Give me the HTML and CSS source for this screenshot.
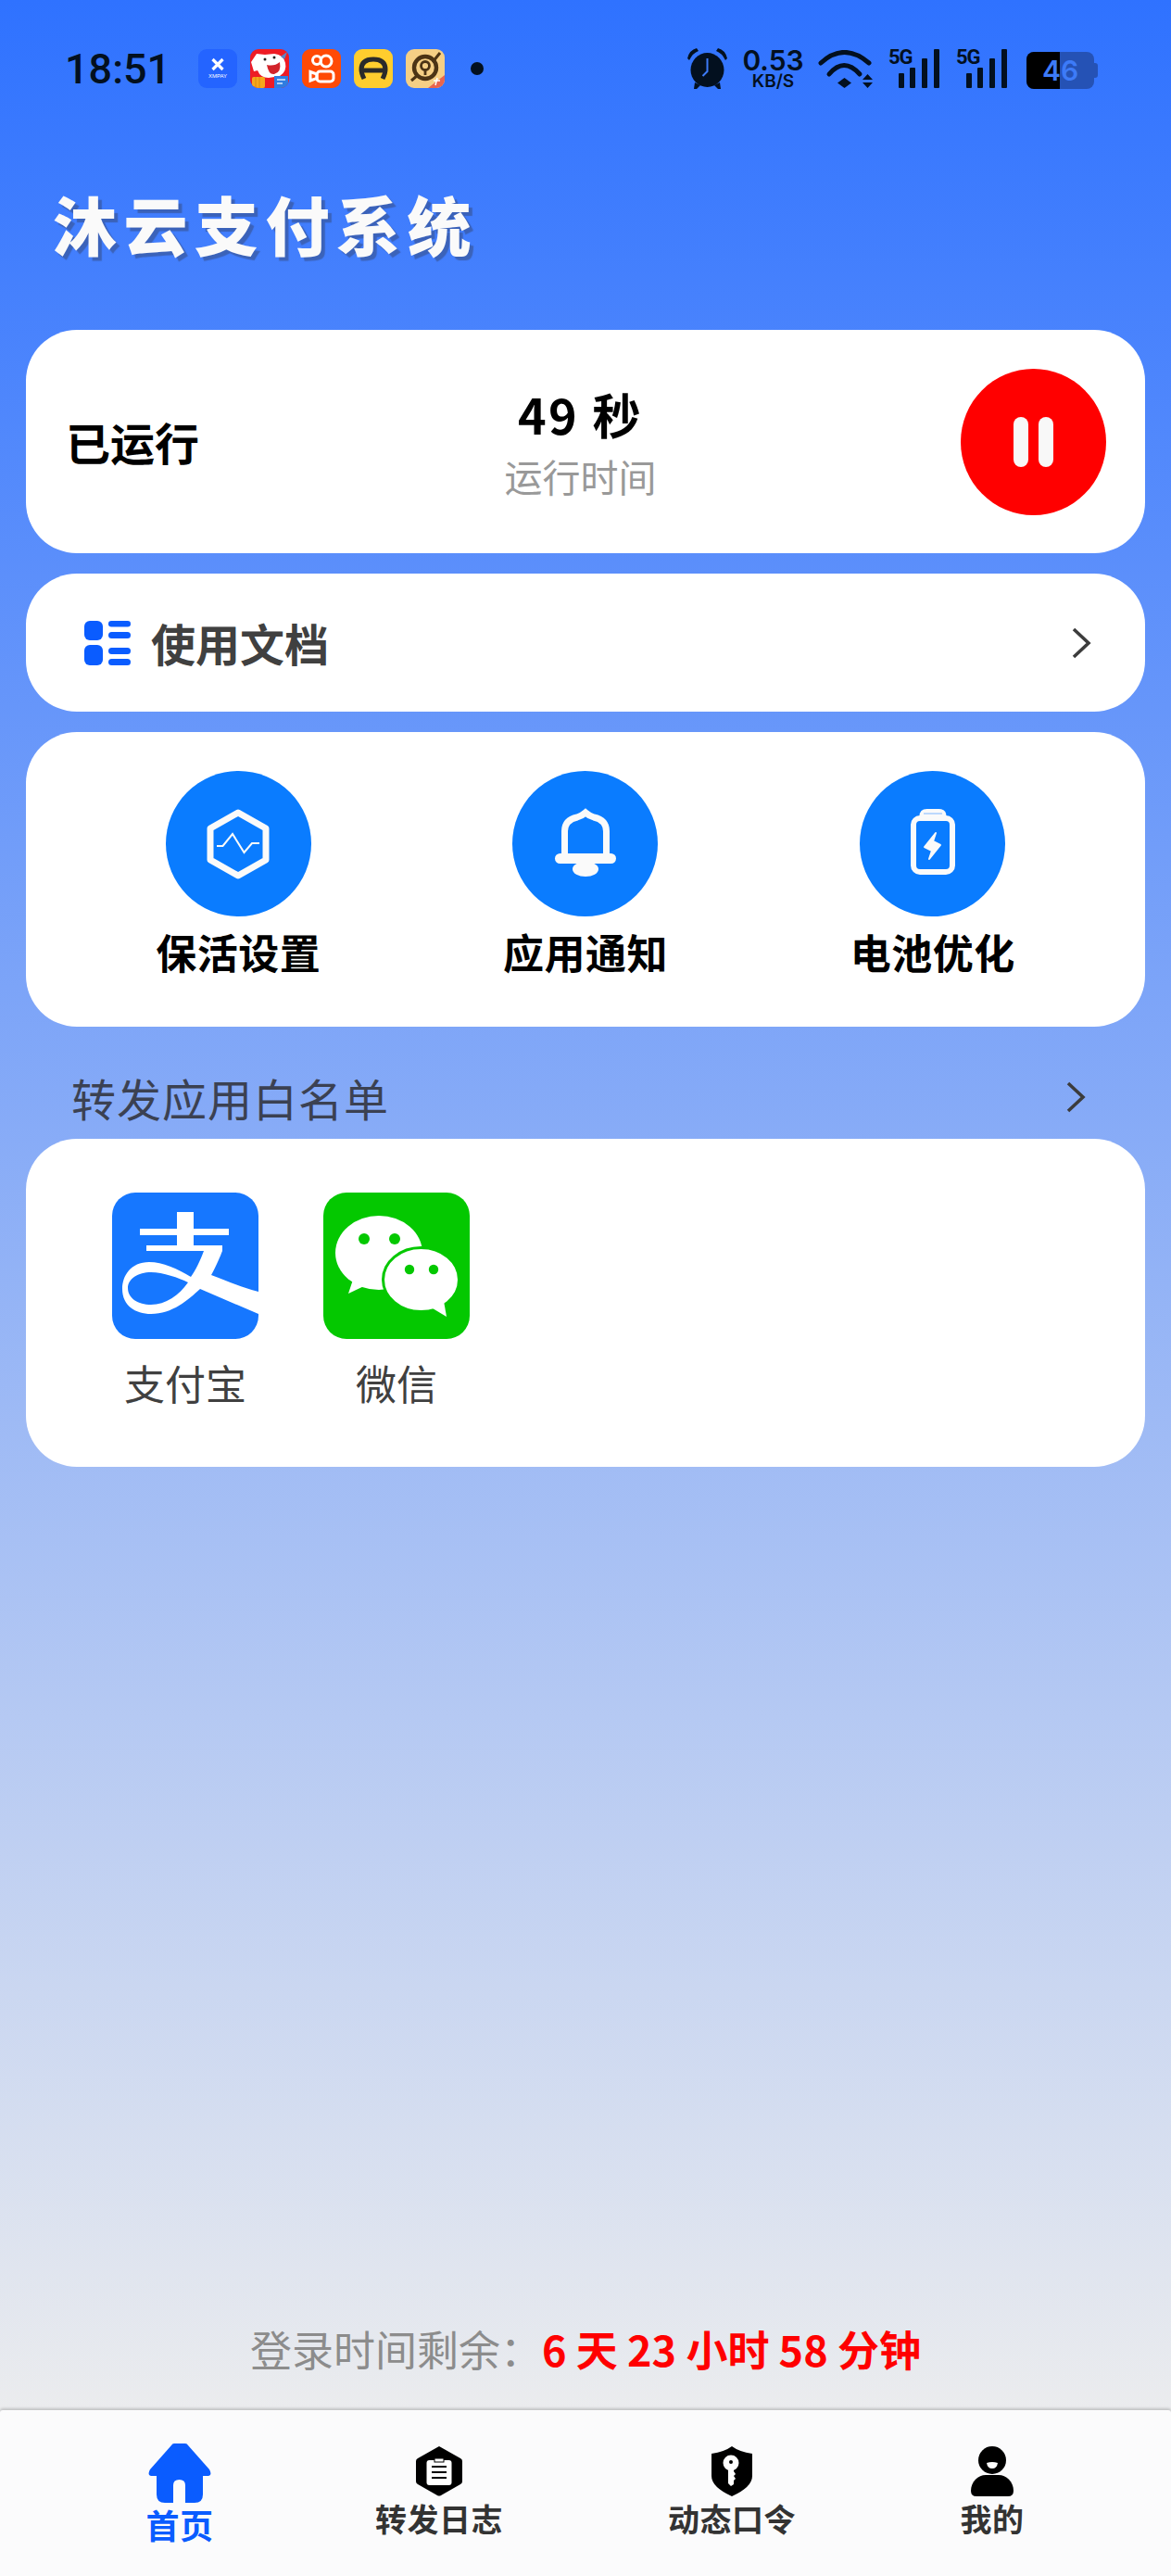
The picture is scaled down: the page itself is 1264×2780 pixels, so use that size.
FILE: index.html
```html
<!DOCTYPE html>
<html lang="zh">
<head>
<meta charset="utf-8">
<title>沐云支付系统</title>
<link rel="stylesheet" href="styles.css">
</head>
<body>
<div class="screen">
  <div class="statusbar">
    <span class="clock">18:51</span>
    <div class="notifs">
      <span class="nicon n-xm"><svg viewBox="0 0 42 42" width="42" height="42"><path d="M15.500 11l11 11M26.500 11l-11 11" stroke="#fff" stroke-width="3.200"/><text x="21" y="31" font-size="6" text-anchor="middle" fill="#fff" class="svgtxt">XMPAY</text></svg></span>
      <span class="nicon n-jd"><svg viewBox="0 0 42 42" width="42" height="42"><rect width="42" height="42" fill="#ee1c25"/><path d="M1 14L7 5l9 1 10-1q10 1 12 10 2 9-6 14l-12 2q-9 0-12-8L4 24z" fill="#fff"/><path d="M18 17q8 2 14-3 2 11-6 13-6 1-8-10z" fill="#d2232a"/><circle cx="16" cy="11" r="1.500" fill="#222"/><circle cx="26" cy="9" r="1.500" fill="#222"/><rect x="2" y="30" width="14" height="12" rx="2" fill="#f6a81c"/><path d="M6 30v12M10 30v12" stroke="#d98a10" stroke-width="1"/><rect x="26" y="29" width="15" height="13" fill="#2f7de1"/><path d="M29 33h9M29 37h6" stroke="#dcecff" stroke-width="1.500"/><path d="M33 8l7-5-3 8z" fill="#5c84c7"/></svg></span>
      <span class="nicon n-ks"><svg viewBox="0 0 42 42" width="42" height="42" fill="none" stroke="#fff" stroke-width="3"><circle cx="16" cy="12" r="4.500"/><circle cx="26" cy="13" r="6"/><rect x="16" y="24" width="18" height="11" rx="3.500"/><path d="M16 27l-7-2.500v9.500l7-2.500z"/></svg></span>
      <span class="nicon n-car"><svg viewBox="0 0 42 42" width="42" height="42" fill="none" stroke="#2a2a2a" stroke-width="5"><path d="M11 32Q8 26 8 22Q8 11 21 11Q34 11 34 22Q34 26 31 32"/><path d="M9 23H33"/></svg></span>
      <span class="nicon n-game"><svg viewBox="0 0 42 42" width="42" height="42" fill="none" stroke="#4c3415"><circle cx="21" cy="20" r="12" stroke-width="4.400"/><circle cx="21" cy="18" r="4.500" stroke-width="2.800"/><path d="M21 22v6" stroke-width="2.800"/><path d="M37 4L29 14M6 34l7-6" stroke-width="3"/><path d="M24 42l18-14v14z" fill="#e8654f" stroke="none"/><path d="M34 31l-2 8M30 34h7" stroke="#fff" stroke-width="1.500"/></svg></span>
      <span class="ndot"></span>
    </div>
    <div class="sys">
      <svg class="alarm" viewBox="0 0 43 44" width="43" height="44"><ellipse cx="21.500" cy="23.500" rx="18" ry="18.500" fill="#03101f"/><path d="M0 11Q2 2 10 0l2 3Q6 5 2 13zM43 11Q41 2 33 0l-2 3q6 2 10 10zM8 37L7 44h3l4-4zM35 37l1 7h-3l-4-4z" fill="#03101f"/><path d="M21.500 11v14l-5 5" stroke="#3d7bf8" stroke-width="2" fill="none"/></svg>
      <div class="speed"><span class="speed-v">0.53</span><span class="speed-u">KB/S</span></div>
      <svg class="wifi" viewBox="0 0 59 41" width="59" height="41"><g fill="none" stroke="#03101f" stroke-width="5" stroke-linecap="round"><path d="M3 14Q28 -9 55 14"/><path d="M12 26Q28 7 45 26"/></g><path d="M28.500 30l7.500 5.500-7.500 5.500-7.500-5.500z" fill="#03101f"/><path d="M48 32l5.500-6 5.500 6zM48 35h11l-5.500 6z" fill="#03101f"/></svg>
      <div class="sig"><span class="sig-5g">5G</span><span class="bar b1"></span><span class="bar b2"></span><span class="bar b3"></span><span class="bar b4"></span></div>
      <div class="sig sig-last"><span class="sig-5g">5G</span><span class="bar b1"></span><span class="bar b2"></span><span class="bar b3"></span><span class="bar b4"></span></div>
      <div class="battery"><span class="batt-fill"></span><span class="batt-num">46</span><span class="batt-cap"></span></div>
    </div>
  </div>

  <h1 class="title">沐云支付系统</h1>

  <main class="cards">
    <section class="card run">
      <span class="run-label">已运行</span>
      <div class="run-center">
        <span class="run-time">49 秒</span>
        <span class="run-sub">运行时间</span>
      </div>
      <button class="pause"><span></span><span></span></button>
    </section>

    <section class="card doc">
      <svg class="doc-icon" viewBox="0 0 50 48" width="50" height="48" fill="#0a5cff"><rect x="0" y="0" width="20" height="21" rx="6"/><rect x="0" y="26" width="20" height="22" rx="6"/><rect x="26" y="0" width="24" height="6.500" rx="3.200"/><rect x="26" y="12" width="24" height="7" rx="3.500"/><rect x="26" y="29" width="24" height="7" rx="3.500"/><rect x="26" y="41" width="24" height="7" rx="3.500"/></svg>
      <span class="doc-text">使用文档</span>
      <svg class="chev chev-doc" viewBox="0 0 22 34" width="22" height="34"><path d="M3 2l16 15L3 32" fill="none" stroke="#3c3c3c" stroke-width="3.600"/></svg>
    </section>

    <section class="card actions">
      <div class="action">
        <span class="act-circle"><svg viewBox="0 0 80 80" width="80" height="80" fill="none" stroke="#fafafa"><path d="M40 6L70 23V57L40 74L10 57V23Z" stroke-width="7" stroke-linejoin="round"/><path d="M17 42h6.500L34 29l12.500 20L55 39h8" stroke-width="2"/></svg></span>
        <span class="act-text">保活设置</span>
      </div>
      <div class="action">
        <span class="act-circle"><svg viewBox="0 0 80 80" width="80" height="80"><path d="M17.500 52V26Q17.500 14 31 11Q36 9.500 40 6Q44 9.500 49 11Q62.500 14 62.500 26V52" fill="none" stroke="#fafafa" stroke-width="7"/><rect x="7" y="50" width="66" height="11" rx="5.500" fill="#fafafa"/><ellipse cx="40" cy="67" rx="14" ry="8" fill="#fafafa"/></svg></span>
        <span class="act-text">应用通知</span>
      </div>
      <div class="action">
        <span class="act-circle"><svg viewBox="0 0 80 80" width="80" height="80"><rect x="19" y="12" width="42" height="58" rx="7" fill="none" stroke="#fafafa" stroke-width="6"/><path d="M25.500 10q0-8 8-8h13q8 0 8 8z" fill="#fafafa"/><path d="M30 7h20" stroke="#7fb6ff" stroke-width="1"/><path d="M43 28L31 43l8 4-3 9 12-15-8-4z" fill="#fafafa" stroke="#fafafa" stroke-width="2" stroke-linejoin="round"/></svg></span>
        <span class="act-text">电池优化</span>
      </div>
    </section>

    <div class="wl-head">
      <span class="wl-title">转发应用白名单</span>
      <svg class="chev" viewBox="0 0 22 34" width="22" height="34"><path d="M3 2l16 15L3 32" fill="none" stroke="#3c3c3c" stroke-width="3.600"/></svg>
    </div>

    <section class="card apps">
      <div class="app">
        <svg class="app-icon" viewBox="0 0 158 158" width="158" height="158"><rect width="158" height="158" rx="25" fill="#1677ff"/><path d="M70 21H88V39H126V46H88V57H119V63H37V57H70V46H30V39H70Z" fill="#fff"/><path fill-rule="evenodd" fill="#fff" d="M158 107C140 102 125 96 107 89C113 78 117 68 119 63H99C95 74 90 84 85 91C70 82 55 75 40 75C20 75 11 90 11 104C11 122 25 131 42 131C65 131 82 116 95 104L158 131ZM82 97C72 92 55 86 42 86C28 86 17 93 17 103C17 114 28 121 42 121C58 121 72 111 82 97Z"/></svg>
        <span class="app-name">支付宝</span>
      </div>
      <div class="app">
        <svg class="app-icon" viewBox="0 0 158 158" width="158" height="158"><rect width="158" height="158" rx="25" fill="#04c800"/><ellipse cx="60" cy="65" rx="47" ry="40" fill="#fff"/><path d="M32 94L27 109L46 100Z" fill="#fff"/><circle cx="44" cy="50" r="6" fill="#04c800"/><circle cx="77" cy="50" r="6" fill="#04c800"/><ellipse cx="105.500" cy="94" rx="41" ry="34.500" fill="#fff" stroke="#04c800" stroke-width="3"/><path d="M118 125L133 134L130 117Z" fill="#fff"/><circle cx="93" cy="83" r="5.200" fill="#04c800"/><circle cx="119" cy="83" r="5.200" fill="#04c800"/></svg>
        <span class="app-name">微信</span>
      </div>
    </section>
  </main>

  <p class="remain">登录时间剩余：<strong>6 天 23 小时 58 分钟</strong></p>

  <nav class="tabbar">
    <a class="tab active">
      <svg viewBox="0 0 68 64" width="68" height="64" fill="#0a5cff"><path d="M28 0H40Q42 0 43 2L66 28Q70 35 63 35H59V55Q59 64 50 64H40V45Q40 39 33.500 39Q27 39 27 45V64H18Q9 64 9 55V35H5Q-2 35 2 28L25 2Q26 0 28 0Z"/></svg>
      <span>首页</span>
    </a>
    <a class="tab">
      <svg viewBox="0 0 50 54" width="50" height="54"><path d="M25 0L48 13Q50 14 50 16V38Q50 40 48 41L27 53Q25 54 23 53L2 41Q0 40 0 38V16Q0 14 2 13Z" fill="#000"/><rect x="11.500" y="15" width="27" height="27" rx="3" fill="#fff"/><rect x="20" y="13" width="10" height="4" fill="#fff" stroke="#000" stroke-width="1"/><path d="M17 22h16M17 28h16M17 34h16" stroke="#000" stroke-width="2"/></svg>
      <span>转发日志</span>
    </a>
    <a class="tab">
      <svg viewBox="0 0 44 54" width="44" height="54"><path d="M22 0Q30 6 44 8V32Q44 44 22 54Q0 44 0 32V8Q14 6 22 0Z" fill="#000"/><circle cx="21" cy="18" r="8.500" fill="#fff"/><circle cx="21" cy="17" r="2" fill="#000"/><path d="M18 24H24V27L26 30L24 32L26 35L24 37V41L21 43L18 40Z" fill="#fff"/></svg>
      <span>动态口令</span>
    </a>
    <a class="tab">
      <svg viewBox="0 0 46 54" width="46" height="54"><ellipse cx="23" cy="15" rx="15" ry="15" fill="#000"/><path d="M17 18Q23 16 29 18Q28 24 23 24T17 18Z" fill="#fff"/><path d="M0 48C0 38 8 31 16 31H30C38 31 46 38 46 48Q46 54 40 54H6Q0 54 0 48Z" fill="#000"/></svg>
      <span>我的</span>
    </a>
  </nav>
</div>
</body>
</html>
```
FILE: styles.css
```css
* { box-sizing: border-box; }
html, body { margin: 0; padding: 0; }
body {
  font-family: "Noto Sans CJK SC", Roboto, "Liberation Sans", sans-serif;
  width: 1264px;
  height: 2780px;
}
.screen {
  width: 1264px;
  height: 2780px;
  display: flex;
  flex-direction: column;
  background: linear-gradient(180deg, #2f72ff 0%, #ebecee 93.500%);
  overflow: hidden;
}

/* status bar */
.statusbar {
  height: 44px;
  margin-top: 52px;
  padding: 0 83px 0 70px;
  display: flex;
  align-items: center;
  flex-shrink: 0;
}
.clock {
  font-family: Roboto, sans-serif;
  font-size: 45px;
  font-weight: 500;
  color: #03101f;
  width: 144px;
}
.notifs { display: flex; align-items: center; gap: 14px; }
.nicon { width: 42px; height: 42px; border-radius: 9px; overflow: hidden; display: block; }
.nicon svg { display: block; }
.n-xm { background: #2464ff; }
.svgtxt { font-family: "Liberation Sans", sans-serif; }
.n-ks { background: #ff4a06; }
.n-car { background: #ffcd2e; }
.n-game { background: #f5cf85; }
.ndot { width: 14px; height: 14px; border-radius: 50%; background: #03101f; margin-left: 14px; }
.sys { margin-left: auto; display: flex; align-items: center; }
.alarm { margin-right: 16px; }
.speed {
  display: flex;
  flex-direction: column;
  align-items: center;
  width: 67px;
  margin-right: 15px;
  color: #03101f;
  font-family: Inter, sans-serif;
  font-weight: 600;
}
.speed-v { font-size: 30px; line-height: 27px; }
.speed-u { font-size: 19px; line-height: 17px; }
.wifi { margin-right: 17px; }
.sig { position: relative; width: 55px; height: 42px; margin-right: 18px; }
.sig-last { margin-right: 21px; }
.sig-5g {
  position: absolute;
  left: 0;
  top: -4px;
  font-family: Roboto, sans-serif;
  font-weight: 700;
  font-size: 22px;
  letter-spacing: -1px;
  color: #03101f;
  line-height: 26px;
}
.bar { position: absolute; bottom: 0; width: 6px; background: #03101f; border-radius: 1px; }
.b1 { left: 11px; height: 16px; }
.b2 { left: 23px; height: 22px; }
.b3 { left: 36px; height: 32px; }
.b4 { left: 49px; height: 42px; }
.battery { position: relative; width: 73px; height: 40px; border-radius: 8px; background: #2552b5; margin-top: 3px; }
.batt-fill { position: absolute; left: 0; top: 0; bottom: 0; width: 36px; background: #000; border-radius: 8px 0 0 8px; }
.batt-num {
  position: absolute;
  left: 0;
  width: 73px;
  top: 0;
  text-align: center;
  font-family: Inter, sans-serif;
  font-weight: 600;
  font-size: 30px;
  line-height: 40px;
  color: #3d7bf8;
}
.batt-cap { position: absolute; right: -4px; top: 12px; width: 4px; height: 16px; border-radius: 0 3px 3px 0; background: #2552b5; }

/* title */
.title {
  margin: 105px 0 0 57px;
  font-size: 69px;
  line-height: 80px;
  font-weight: 900;
  letter-spacing: 7.500px;
  color: #fafafa;
  text-shadow: 4px 4px 1px rgba(55, 80, 140, .6);
  flex-shrink: 0;
}

/* cards */
.cards { padding: 0 28px; margin-top: 75px; display: flex; flex-direction: column; gap: 22px; flex-shrink: 0; }
.card { background: #fff; border-radius: 55px; }
.run {
  height: 241px;
  display: grid;
  grid-template-columns: 1fr auto 1fr;
  align-items: center;
  padding: 0 42px 0 43px;
}
.run-label { font-size: 48px; font-weight: 700; color: #000; line-height: 60px; margin-top: -2px; }
.run-center {
  align-self: start;
  margin: 57px 12px 0 0;
  display: flex;
  flex-direction: column;
  align-items: center;
}
.run-time { font-size: 52px; font-weight: 700; letter-spacing: 2.500px; color: #000; line-height: 68px; }
.run-sub { margin-top: 6px; font-size: 41px; color: #999; line-height: 52px; }
.pause {
  justify-self: end;
  width: 157px;
  height: 158px;
  border-radius: 50%;
  background: #ff0000;
  border: 0;
  display: flex;
  align-items: center;
  justify-content: center;
  gap: 11px;
  padding: 0;
}
.pause span { width: 16px; height: 54px; border-radius: 8px; background: #f8f8f8; }
.doc { height: 149px; display: flex; align-items: center; padding: 0 58px 0 63px; }
.doc-text { font-size: 48px; font-weight: 700; color: #404040; margin-left: 22px; line-height: 60px; margin-top: -1px; }
.chev-doc { margin-left: auto; }
.actions { height: 318px; display: grid; grid-template-columns: repeat(3, 1fr); padding: 42px 42px 0; }
.action { display: flex; flex-direction: column; align-items: center; }
.act-circle { width: 157px; height: 157px; border-radius: 50%; background: #0a7cff; display: flex; align-items: center; justify-content: center; }
.act-text { margin-top: 8px; font-size: 44px; font-weight: 700; color: #000; line-height: 60px; letter-spacing: 0.500px; }
.wl-head {
  display: flex;
  align-items: flex-end;
  justify-content: space-between;
  padding: 0 64px 17px 49px;
  height: 121px;
  margin: -22px 0;
}
.wl-title { font-size: 48px; color: #3b4152; line-height: 56px; letter-spacing: 1px; }
.wl-head .chev { margin-bottom: 11px; }
.apps { height: 354px; display: flex; padding: 58px 0 0 93px; gap: 70px; }
.app { width: 158px; display: flex; flex-direction: column; align-items: center; }
.app-icon { display: block; }
.app-name { margin-top: 17px; font-size: 44px; color: #404040; line-height: 60px; white-space: nowrap; }

/* footer */
.remain {
  flex: 1;
  margin: 0;
  display: flex;
  align-items: flex-end;
  justify-content: center;
  padding-bottom: 36px;
  font-size: 45px;
  color: #8c8c8c;
  line-height: 60px;
}
.remain strong { color: #ff0000; font-weight: 700; }
.tabbar {
  height: 179px;
  flex-shrink: 0;
  background: #fbfbfc;
  border-radius: 3px 3px 0 0;
  box-shadow: 0 -2px 3px rgba(0,0,0,.18);
  display: flex;
  align-items: flex-start;
  padding: 39px 0 0 119px;
}
.tab {
  width: 150px;
  display: flex;
  flex-direction: column;
  align-items: center;
  color: #333;
  font-size: 34px;
  font-weight: 700;
  line-height: 42px;
  letter-spacing: 0.500px;
}
.tab svg { display: block; }
.tab span { margin-top: 3px; white-space: nowrap; }
.tab:nth-child(1) { margin-top: -3px; color: #0a5cff; }
.tab:nth-child(1) span { font-size: 36px; margin-top: 2px; }
.tab:nth-child(2) { margin-left: 130px; }
.tab:nth-child(3) { margin-left: 166px; }
.tab:nth-child(4) { margin-left: 131px; }
```
